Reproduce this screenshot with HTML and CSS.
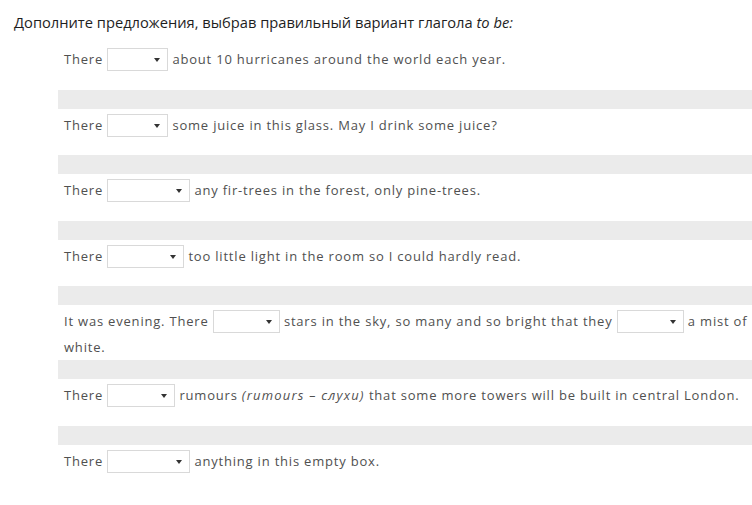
FILE: index.html
```html
<!DOCTYPE html>
<html lang="ru">
<head>
<meta charset="utf-8">
<title>to be</title>
<link rel="stylesheet" href="styles.css">
</head>
<body>
<h1 class="task">Дополните предложения, выбрав правильный вариант глагола <em>to be:</em></h1>
<div class="rows">
  <div class="row">There <span class="sel w61"><i class="arr"></i></span> about 10 hurricanes around the world each year.</div>
  <div class="row">There <span class="sel w61"><i class="arr"></i></span> some juice in this glass. May I drink some juice?</div>
  <div class="row">There <span class="sel w83"><i class="arr"></i></span> any fir-trees in the forest, only pine-trees.</div>
  <div class="row">There <span class="sel w77"><i class="arr"></i></span> too little light in the room so I could hardly read.</div>
  <div class="row">It was evening. There <span class="sel w67"><i class="arr"></i></span> stars in the sky, so many and so bright that they <span class="sel w67"><i class="arr"></i></span> a mist of<br>white.</div>
  <div class="row">There <span class="sel w68"><i class="arr"></i></span> rumours <em>(rumours – слухи)</em> that some more towers will be built in central London.</div>
  <div class="row">There <span class="sel w83"><i class="arr"></i></span> anything in this empty box.</div>
</div>
</body>
</html>
```
FILE: styles.css
```css
html, body {
  margin: 0;
  padding: 0;
  background: #ffffff;
}
body {
  font-family: "Open Sans", "Noto Sans", sans-serif;
  width: 752px;
  overflow: hidden;
}
.task {
  margin: 0;
  padding: 12px 0 0 14px;
  font-size: 14.7px;
  line-height: 20px;
  font-weight: 400;
  color: #1e1e1e;
}
.task em {
  font-style: italic;
}
.rows {
  margin: 11px 0 0 58px;
}
.row {
  min-height: 43.5px;
  padding: 3px 0 0 6px;
  font-size: 13px;
  letter-spacing: 0.8px;
  line-height: 26px;
  color: #505050;
}
.row + .row {
  border-top: 19px solid #ebebeb;
}
.row em {
  font-style: italic;
  letter-spacing: 1.2px;
}
.sel {
  display: inline-block;
  position: relative;
  box-sizing: border-box;
  height: 23px;
  vertical-align: middle;
  margin: -2px 0 0;
  border: 1px solid #d9d9d9;
  background: #fff;
}
.arr {
  position: absolute;
  right: 7px;
  top: 9px;
  width: 0;
  height: 0;
  border-left: 3px solid transparent;
  border-right: 3px solid transparent;
  border-top: 4px solid #333;
}
.w61 { width: 61px; }
.w67 { width: 67px; }
.w68 { width: 68px; }
.w77 { width: 77px; }
.w83 { width: 83px; }
```
